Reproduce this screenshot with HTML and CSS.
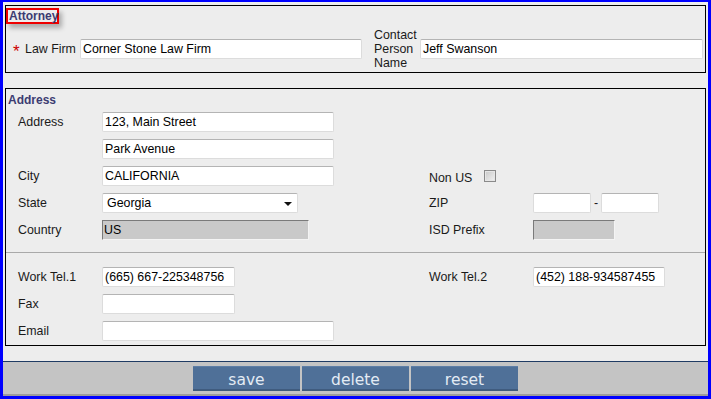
FILE: index.html
```html
<!DOCTYPE html>
<html>
<head>
<meta charset="utf-8">
<link rel="stylesheet" href="styles.css">
</head>
<body>
<div class="frame">
  <div class="content">
    <div class="section attorney">
      <div class="legend-box"><span class="legend">Attorney</span></div>
      <div class="att-row">
        <span class="req">*</span>
        <span class="lbl">Law Firm</span>
        <div class="field w282">Corner Stone Law Firm</div>
        <span></span>
        <span class="lbl wrap">Contact Person Name</span>
        <div class="field w283">Jeff Swanson</div>
      </div>
    </div>

    <div class="section address">
      <div class="sec-title">Address</div>
      <div class="grid">
        <span class="lbl">Address</span>
        <div class="cell"><div class="field w232">123, Main Street</div></div>
        <span></span><span></span>

        <span></span>
        <div class="cell"><div class="field w232">Park Avenue</div></div>
        <span></span><span></span>

        <span class="lbl">City</span>
        <div class="cell"><div class="field w232">CALIFORNIA</div></div>
        <span class="lbl nonus">Non US <span class="check"></span></span>
        <span></span>

        <span class="lbl">State</span>
        <div class="cell"><div class="field select w196">Georgia<span class="arrow"></span></div></div>
        <span class="lbl">ZIP</span>
        <div class="cell zip"><div class="field w58"></div><span class="dash">-</span><div class="field w58"></div></div>

        <span class="lbl">Country</span>
        <div class="cell"><div class="field ro w207">US</div></div>
        <span class="lbl">ISD Prefix</span>
        <div class="cell"><div class="field ro w82"></div></div>
      </div>
      <div class="sep"></div>
      <div class="grid grid2">
        <span class="lbl">Work Tel.1</span>
        <div class="cell"><div class="field w133">(665) 667-225348756</div></div>
        <span class="lbl">Work Tel.2</span>
        <div class="cell"><div class="field w132">(452) 188-934587455</div></div>

        <span class="lbl">Fax</span>
        <div class="cell"><div class="field w133"></div></div>
        <span></span><span></span>

        <span class="lbl">Email</span>
        <div class="cell"><div class="field w232"></div></div>
        <span></span><span></span>
      </div>
    </div>
  </div>
  <div class="toolbar">
    <span class="btn">save</span>
    <span class="btn">delete</span>
    <span class="btn">reset</span>
  </div>
</div>
</body>
</html>
```

FILE: styles.css
```css
html, body {
  margin: 0;
  padding: 0;
}
body {
  font-family: "Liberation Sans", Arial, sans-serif;
  font-size: 12.4px;
  color: #1a1a1a;
}
.frame {
  box-sizing: border-box;
  width: 711px;
  height: 399px;
  border: 3px solid #0000ff;
  border-top-width: 2px;
  background: #ededed;
  display: flex;
  flex-direction: column;
}
.content {
  flex: 1;
  padding: 3px 2px 0 2px;
}
.section {
  border: 1px solid #000;
  box-sizing: border-box;
}
.attorney {
  height: 68px;
  padding-top: 2px;
}
.legend-box {
  display: flex;
}
.legend {
  box-sizing: border-box;
  height: 16px;
  width: 53px;
  border: 2px solid #ee0000;
  padding-left: 1px;
  line-height: 12px;
  font-size: 12px;
  font-weight: bold;
  color: #3c3c72;
  box-shadow: 3px 4px 5px rgba(0, 0, 0, 0.28);
}
.att-row {
  margin-top: 4px;
  height: 42px;
  padding-left: 7px;
  display: grid;
  grid-template-columns: 12px 55px 282px 12px 46px 283px;
  align-items: center;
}
.req {
  color: #cc0000;
  font-size: 17px;
  line-height: 10px;
  padding-top: 6px;
}
.lbl {
  line-height: 14px;
  white-space: nowrap;
}
.lbl.wrap {
  white-space: normal;
}
.field {
  box-sizing: border-box;
  height: 20px;
  background: #fff;
  border: 1px solid #dcdcdc;
  border-top-color: #b4b4b4;
  border-radius: 2px;
  padding: 0 2px;
  line-height: 18px;
  color: #000;
  white-space: nowrap;
  overflow: hidden;
}
.field.ro {
  background: #c9c9c9;
  border-color: #f4f4f4;
  border-top-color: #7a7a7a;
  border-left-color: #7a7a7a;
  border-radius: 0;
  padding-left: 1px;
}
.field.select {
  position: relative;
  padding-left: 4px;
}
.arrow {
  position: absolute;
  right: 5px;
  top: 8px;
  width: 0;
  height: 0;
  border-left: 4px solid transparent;
  border-right: 4px solid transparent;
  border-top: 4px solid #111;
}
.w282 { width: 282px; }
.w283 { width: 283px; }
.w232 { width: 232px; }
.w196 { width: 196px; }
.w207 { width: 207px; }
.w133 { width: 133px; }
.w132 { width: 132px; }
.w58 { width: 58px; }
.w82 { width: 82px; }

.address {
  margin-top: 15px;
  height: 258px;
}
.sec-title {
  margin-top: 4px;
  padding-left: 2px;
  height: 14px;
  line-height: 14px;
  font-size: 12px;
  font-weight: bold;
  color: #3c3c72;
}
.grid {
  margin-top: 5px;
  padding-left: 12px;
  display: grid;
  grid-template-columns: 84px 327px 104px 1fr;
  grid-auto-rows: 20px;
  row-gap: 7px;
  align-items: center;
}
.grid2 {
  margin-top: 14px;
}
.cell {
  display: flex;
  align-items: center;
}
.zip {
  gap: 3px;
}
.dash {
  width: 4px;
  text-align: center;
}
.nonus {
  display: flex;
  align-items: center;
  padding-top: 4px;
}
.check {
  display: inline-block;
  box-sizing: border-box;
  width: 12px;
  height: 12px;
  margin-left: 12px;
  margin-top: -4px;
  border: 1px solid #8a8a8a;
  background: linear-gradient(135deg, #c8c8c8, #f2f2f2);
  box-shadow: inset 0 0 0 1px #e6e6e6;
}
.sep {
  margin-top: 12px;
  height: 1px;
  background: #a9a9a9;
}

.toolbar {
  height: 35px;
  box-sizing: border-box;
  border-top: 1px solid #1f3b63;
  border-bottom: 2px solid #9c9c9c;
  background: #c4c4c4;
  display: flex;
  justify-content: center;
  align-items: flex-start;
  padding-top: 4px;
  gap: 2px;
}
.btn {
  box-sizing: border-box;
  width: 107px;
  height: 25px;
  background: #4f7098;
  border-top: 1px solid #5d7ea6;
  border-bottom: 2px solid #3f5b7e;
  color: #e3ebf4;
  font-family: "DejaVu Sans", Verdana, sans-serif;
  font-size: 15.5px;
  line-height: 26px;
  text-align: center;
}
```
